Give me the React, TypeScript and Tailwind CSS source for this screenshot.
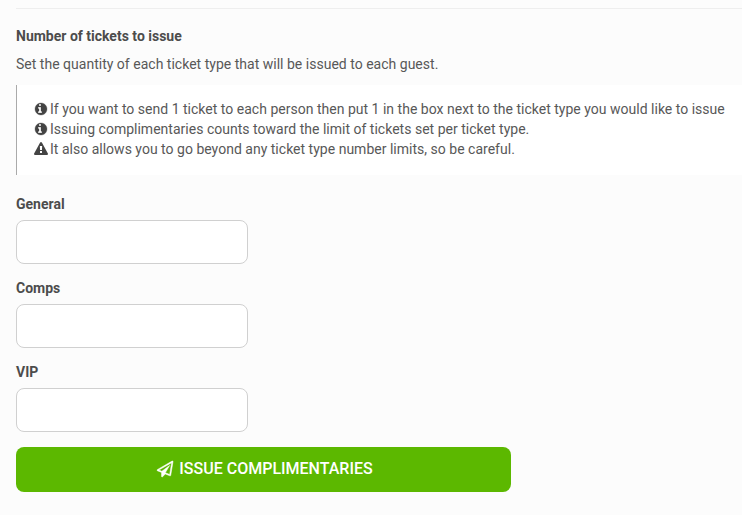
const icons = {
  info: "M1024 1376v-160q0-14-9-23t-23-9h-96v-512q0-14-9-23t-23-9h-320q-14 0-23 9t-9 23v160q0 14 9 23t23 9h96v320h-96q-14 0-23 9t-9 23v160q0 14 9 23t23 9h448q14 0 23-9t9-23zm-128-896v-192q0-14-9-23t-23-9h-192q-14 0-23 9t-9 23v192q0 14 9 23t23 9h192q14 0 23-9t9-23zm768 416q0 209-103 385.5t-279.5 279.5-385.5 103-385.5-103-279.5-279.5-103-385.5 103-385.5 279.5-279.5 385.5-103 385.5 103 279.5 279.5 103 385.5z",
  warning: "M1024 1375v-190q0-14-9.5-23.5t-22.5-9.5h-192q-13 0-22.5 9.5t-9.5 23.5v190q0 14 9.5 23.5t22.5 9.5h192q13 0 22.5-9.5t9.5-23.5zm-2-374l18-459q0-12-10-19-13-11-24-11h-220q-11 0-24 11-10 7-10 21l17 457q0 10 10 16.5t24 6.5h185q14 0 23.5-6.5t10.5-16.5zm-14-934l768 1408q35 63-2 126-17 29-46.5 46t-63.5 17h-1536q-34 0-63.5-17t-46.5-46q-37-63-2-126l768-1408q17-31 47-49t65-18 65 18 47 49z",
  plane: "M1764 11q33 24 27 64l-256 1536q-5 29-32 45-14 8-31 8-11 0-24-5l-527-215-298 327q-18 21-47 21-14 0-23-4-19-7-30-23.5t-11-36.5v-452l-472-193q-37-14-40-55-3-39 32-59l1664-960q35-21 68 2zm-342 1499l221-1323-1434 827 336 137 863-639-478 797z",
};

function Icon({ name, className }: { name: keyof typeof icons; className: string }) {
  return <svg aria-hidden="true" viewBox="0 0 1792 1792" fill="currentColor" className={className}><path d={icons[name]} /></svg>;
}

function Field({ label }: { label: string }) {
  return (
    <div className="mb-[14px]">
      <label className="block h-5 text-sm font-bold leading-5">{label}</label>
      <input aria-label={label} className="mt-[6px] block h-11 w-[232px] rounded-lg border border-[#d0d0d0] bg-white" />
    </div>
  );
}

export default function App() {
  return (
    <main className="h-[515px] w-full overflow-hidden bg-[#fcfcfc] pl-4 pt-2 font-['Roboto',sans-serif] text-sm leading-5 text-[#4c4c4c]">
      <hr className="border-[#eee]" />
      <h4 className="mt-[17px] font-bold">Number of tickets to issue</h4>
      <p className="mt-2 tracking-[0.012px] text-[#585858]">Set the quantity of each ticket type that will be issued to each guest.</p>
      <div className="mt-[11px] h-[90px] whitespace-nowrap border-l border-[#aaa] bg-white pl-[17px] pt-[14px] tracking-[0.012px] text-[#585858]">
        <p className="flex items-center gap-[2px]"><Icon name="info" className="size-[14px] overflow-visible stroke-[#444] stroke-[40] text-[#444]" />If you want to send 1 ticket to each person then put 1 in the box next to the ticket type you would like to issue</p>
        <p className="flex items-center gap-[2px]"><Icon name="info" className="size-[14px] overflow-visible stroke-[#444] stroke-[40] text-[#444]" />Issuing complimentaries counts toward the limit of tickets set per ticket type.</p>
        <p className="flex items-center gap-[2px]"><Icon name="warning" className="size-[14px] text-[#444]" />It also allows you to go beyond any ticket type number limits, so be careful.</p>
      </div>
      <form className="mt-[19px]">
        <Field label="General" />
        <Field label="Comps" />
        <Field label="VIP" />
        <button type="button" className="mt-[15px] flex h-[45px] w-[495px] items-center justify-center gap-[6px] rounded-lg bg-[#5cb800] pb-[2px] pl-[3px] text-base font-medium text-white">
          <Icon name="plane" className="size-4 overflow-visible stroke-white stroke-[60]" />ISSUE COMPLIMENTARIES
        </button>
      </form>
    </main>
  );
}
